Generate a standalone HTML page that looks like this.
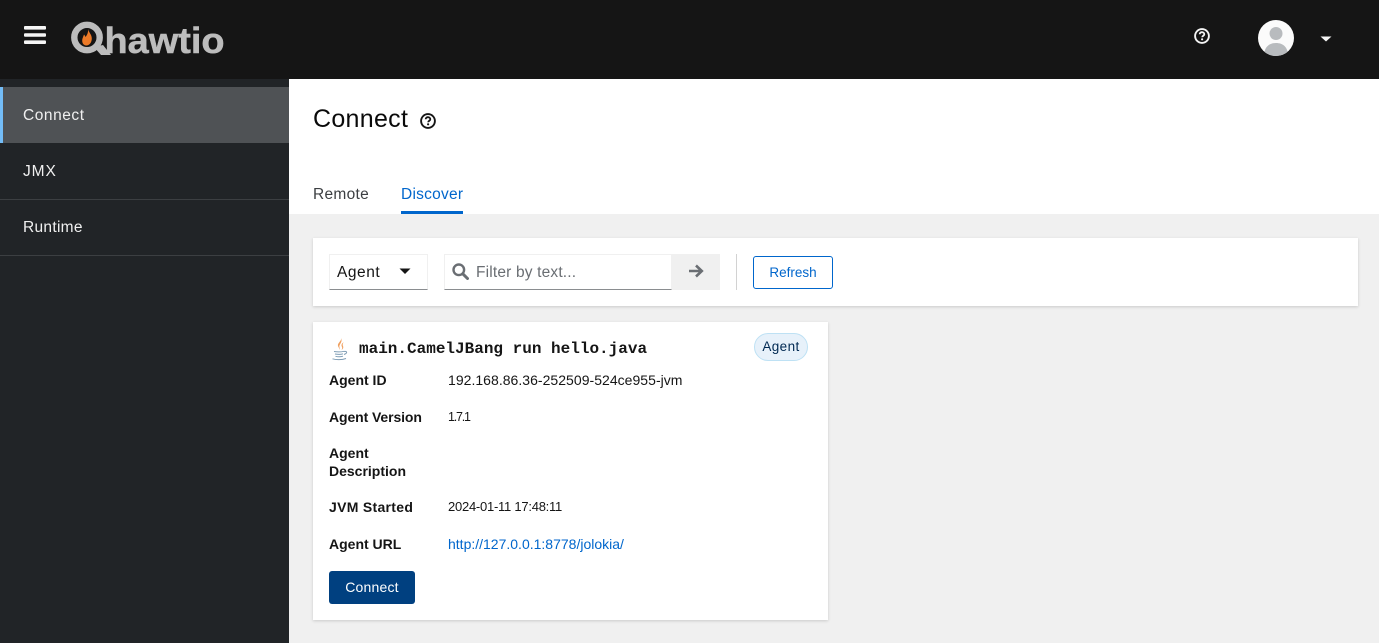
<!DOCTYPE html>
<html lang="en">
<head>
<meta charset="utf-8">
<title>Hawtio</title>
<style>
html,body{margin:0;padding:0;width:1379px;height:643px;overflow:hidden;background:#f0f0f0;font-family:"Liberation Sans",sans-serif;color:#151515}
.a{position:absolute;white-space:nowrap}
.t{font-size:14px;line-height:18px}
.b{font-weight:bold}
a{text-decoration:none}
</style>
</head>
<body>
<div class="a" style="left:0;top:0;width:1379px;height:79px;background:#151515"></div>

<svg class="a" style="left:24px;top:25px" width="22" height="20" viewBox="0 0 22 20"><rect x="0" y="1" width="22" height="3.600" rx="1" fill="#f5f5f5"/><rect x="0" y="8.200" width="22" height="3.600" rx="1" fill="#f5f5f5"/><rect x="0" y="15.400" width="22" height="3.600" rx="1" fill="#f5f5f5"/></svg>

<svg class="a" style="left:70px;top:20px" width="158" height="38" viewBox="0 0 158 38">
<circle cx="17" cy="17.500" r="12.700" fill="none" stroke="#bcbcbc" stroke-width="6.400"/>
<path d="M24 27 L31 35 L41 35 L33 25 Z" fill="#bcbcbc"/>
<path d="M18 9 C19 13 22 14.500 21.800 19 C21.500 23 19 25.500 16.500 25.500 C13 25.500 11.500 22 12.500 18.500 C13 17 13.500 16 14 14.500 C15 15.500 15.300 16.500 15.600 17 C17 15 18.500 12.500 18 9 Z" fill="#ec7a28"/>
<text x="34.500" y="33" font-family="Liberation Sans,sans-serif" font-size="36" font-weight="bold" fill="#bcbcbc" stroke="#bcbcbc" stroke-width=".5" textLength="120" lengthAdjust="spacingAndGlyphs">hawtio</text>
</svg>

<svg class="a" style="left:1194px;top:28px" width="16" height="16" viewBox="0 0 16 16"><circle cx="8" cy="8" r="6.900" fill="none" stroke="#f5f5f5" stroke-width="1.900"/><path d="M5.700 6.300 C5.700 4.900 6.800 4.200 8 4.200 C9.300 4.200 10.300 5 10.300 6.200 C10.300 7.700 8.200 7.800 8.200 9.300" fill="none" stroke="#f5f5f5" stroke-width="1.800"/><circle cx="8.100" cy="11.300" r="1.100" fill="#f5f5f5"/></svg>

<svg class="a" style="left:1258px;top:20px" width="36" height="36" viewBox="0 0 36 36"><defs><clipPath id="c"><circle cx="18" cy="18" r="18"/></clipPath></defs><circle cx="18" cy="18" r="18" fill="#fbfbfb"/><g clip-path="url(#c)"><circle cx="18" cy="13.500" r="6.500" fill="#b8bbbe"/><path d="M6 36 C6 27 11 23 18 23 C25 23 30 27 30 36 Z" fill="#b8bbbe"/></g></svg>

<svg class="a" style="left:1320px;top:35px" width="12" height="7" viewBox="0 0 12 7"><path d="M.5 1.500 H11.500 L6 6.500 Z" fill="#f5f5f5"/></svg>

<div class="a" style="left:0;top:79px;width:289px;height:564px;background:#212427"></div>
<div class="a" style="left:0;top:87px;width:289px;height:56px;background:#4f5255"></div>
<div class="a" style="left:0;top:87px;width:3px;height:56px;background:#73bcf7"></div>
<div class="a" style="left:0;top:199px;width:289px;height:1px;background:#3c3f42"></div>
<div class="a" style="left:0;top:255px;width:289px;height:1px;background:#3c3f42"></div>
<div class="a" style="left:23px;top:106px;font-size:15.500px;line-height:20px;color:#f0f0f0;letter-spacing:.55px">Connect</div>
<div class="a" style="left:23px;top:162px;font-size:15.500px;line-height:20px;color:#f0f0f0;letter-spacing:.9px">JMX</div>
<div class="a" style="left:23px;top:218px;font-size:15.500px;line-height:20px;color:#f0f0f0;letter-spacing:.3px">Runtime</div>

<div class="a" style="left:289px;top:79px;width:1090px;height:135px;background:#fff"></div>
<div class="a" style="left:313px;top:104px;font-size:25px;line-height:30px;color:#0a0a0a;letter-spacing:.3px">Connect</div>
<svg class="a" style="left:420px;top:113px" width="16" height="16" viewBox="0 0 16 16"><circle cx="8" cy="8" r="6.900" fill="none" stroke="#151515" stroke-width="1.900"/><path d="M5.700 6.300 C5.700 4.900 6.800 4.200 8 4.200 C9.300 4.200 10.300 5 10.300 6.200 C10.300 7.700 8.200 7.800 8.200 9.300" fill="none" stroke="#151515" stroke-width="1.800"/><circle cx="8.100" cy="11.300" r="1.100" fill="#151515"/></svg>

<div class="a" style="left:313px;top:185px;font-size:15.500px;line-height:20px;color:#3c3f42;letter-spacing:.3px">Remote</div>
<div class="a" style="left:401px;top:185px;font-size:15.500px;line-height:20px;color:#06c;letter-spacing:.25px">Discover</div>
<div class="a" style="left:401px;top:211px;width:62px;height:3px;background:#06c"></div>

<div class="a" style="left:313px;top:238px;width:1045px;height:68px;background:#fff;box-shadow:0 1px 3px rgba(3,3,3,.16)"></div>
<div class="a" style="left:329px;top:254px;width:99px;height:36px;box-sizing:border-box;border:1px solid #f0f0f0;border-bottom:1px solid #8a8d90"></div>
<div class="a" style="left:337px;top:263px;font-size:15.500px;line-height:20px;color:#151515;letter-spacing:.55px">Agent</div>
<svg class="a" style="left:399px;top:268px" width="12" height="7" viewBox="0 0 12 7"><path d="M.5 .5 H11.500 L6 6 Z" fill="#151515"/></svg>

<div class="a" style="left:444px;top:254px;width:228px;height:36px;box-sizing:border-box;border:1px solid #f0f0f0;border-bottom:1px solid #8a8d90"></div>
<svg class="a" style="left:452px;top:263px" width="17" height="17" viewBox="0 0 17 17"><circle cx="6.800" cy="6.800" r="5.300" fill="none" stroke="#6a6e73" stroke-width="2.400"/><path d="M10.800 10.800 L15.500 15.500" stroke="#6a6e73" stroke-width="3" stroke-linecap="round"/></svg>
<div class="a" style="left:476px;top:263px;font-size:15.500px;line-height:20px;color:#6a6e73;letter-spacing:.17px">Filter by text...</div>
<div class="a" style="left:672px;top:254px;width:48px;height:36px;background:#f0f0f0"></div>
<svg class="a" style="left:688px;top:263px" width="16" height="16" viewBox="0 0 16 16"><path d="M1 8 H13.500 M8 2.500 L13.800 8 L8 13.500" fill="none" stroke="#6a6e73" stroke-width="2.600"/></svg>
<div class="a" style="left:736px;top:254px;width:1px;height:36px;background:#d2d2d2"></div>
<div class="a" style="left:753px;top:256px;width:80px;height:33px;box-sizing:border-box;border:1px solid #06c;border-radius:3px;text-align:center;font-size:13.500px;line-height:31px;color:#06c">Refresh</div>

<div class="a" style="left:313px;top:322px;width:515px;height:298px;background:#fff;box-shadow:0 1px 3px rgba(3,3,3,.16)"></div>
<svg class="a" style="left:330px;top:337px" width="20" height="24" viewBox="0 0 20 24">
<path d="M11 1 C12 4 7 6 8 9 C8.500 10.500 9.500 11.500 10 13 C10 11 9 10 9.500 8.500 C10.500 6 12.500 4.500 11 1 Z" fill="#f0a060"/>
<path d="M14 5 C11.500 6.500 11 8 12 10 C12.500 11 12 12 11.500 13 C13.500 11.500 13.500 10.500 13 9 C12.500 8 12.500 6.500 14 5 Z" fill="#f0a060"/>
<path d="M4 14.500 C7 15 11 15 14 14.300 M5 17 C8 17.500 11 17.500 13 16.800 M5.500 19.300 C8 20 11 19.800 13 19.200 M2.500 21.800 C6 23 12 23 16 21.500 M14 14.500 C17 13.800 18 16 14 17.500" fill="none" stroke="#7f9db5" stroke-width="1"/>
</svg>
<div class="a" style="left:359px;top:340px;font-family:'Liberation Mono',monospace;font-weight:bold;font-size:16px;line-height:19px;color:#151515">main.CamelJBang run hello.java</div>
<div class="a" style="left:754px;top:333px;width:54px;height:28px;box-sizing:border-box;background:#e7f1fa;border:1px solid #bee1f4;border-radius:14px;text-align:center;font-size:13.500px;line-height:25px;color:#002952;letter-spacing:.4px">Agent</div>

<div class="a t b" style="left:329px;top:371px">Agent ID</div>
<div class="a t" style="left:448px;top:371px;letter-spacing:.03px">192.168.86.36-252509-524ce955-jvm</div>
<div class="a t b" style="left:329px;top:408px;letter-spacing:-.1px">Agent Version</div>
<div class="a t" style="left:448px;top:408px;font-size:12.500px;letter-spacing:-1.200px">1.7.1</div>
<div class="a t b" style="left:329px;top:444px">Agent<br>Description</div>
<div class="a t b" style="left:329px;top:498px;letter-spacing:.3px">JVM Started</div>
<div class="a t" style="left:448px;top:498px;font-size:13px;letter-spacing:-.25px">2024-01-11 17:48:11</div>
<div class="a t b" style="left:329px;top:535px">Agent URL</div>
<div class="a t" style="left:448px;top:535px;color:#06c">http://127.0.0.1:8778/jolokia/</div>
<div class="a" style="left:329px;top:571px;width:86px;height:33px;background:#004080;border-radius:3px;text-align:center;font-size:14px;line-height:33px;color:#fff;letter-spacing:.2px">Connect</div>
</body>
</html>
